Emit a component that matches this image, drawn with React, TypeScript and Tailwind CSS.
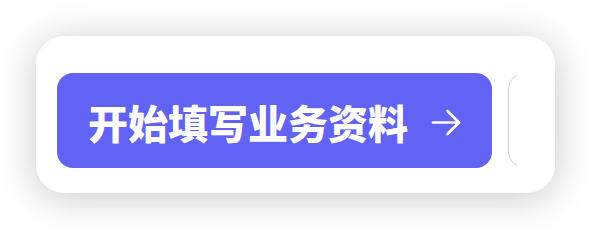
export default function App() {
  return (
    <div className="min-h-[230px] w-[592px] bg-white pl-[36px] pt-[36px]">
      <div className="w-[519px] h-[157px] rounded-[28px] bg-white shadow-[0_4px_38px_rgba(0,0,0,0.22)] pl-[21px] pt-[37px]">
        <div className="flex w-[460px] gap-4 overflow-hidden">
          <button className="flex h-[95px] w-[435px] shrink-0 items-center rounded-2xl bg-[#6262f5] pl-[31px] text-white">
            <span className="pt-[3px] text-[40px] font-black leading-none tracking-normal [font-family:'Noto_Sans_CJK_SC',sans-serif]">
              开始填写业务资料
            </span>
            <svg className="ml-[23px] mt-[3px]" width="30" height="27" viewBox="0 0 30 27" fill="none" stroke="currentColor" strokeWidth="2.6" strokeLinecap="round" strokeLinejoin="round">
              <path d="M2 13.5h26" />
              <path d="M16.5 2l11.5 11.5-11.5 11.5" />
            </svg>
          </button>
          <div className="h-[95px] w-[120px] shrink-0 rounded-2xl border-[1.5px] border-gray-300 bg-white" />
        </div>
      </div>
    </div>
  );
}
